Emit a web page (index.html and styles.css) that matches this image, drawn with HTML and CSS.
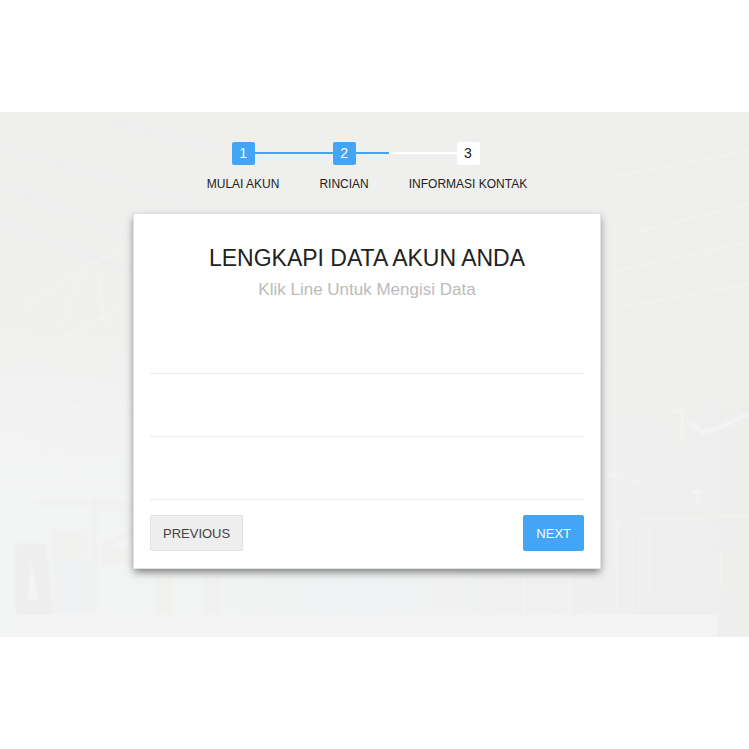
FILE: index.html
```html
<!DOCTYPE html>
<html lang="id">
<head>
    <meta charset="UTF-8">
    <meta name="viewport" content="width=device-width, initial-scale=1.0">
    <title>Lengkapi Data Akun</title>
    <link rel="stylesheet" href="styles.css">
</head>
<body>
    <main class="page">
        <svg class="backdrop" viewBox="0 0 749 525" preserveAspectRatio="none" aria-hidden="true">
            <defs>
                <linearGradient id="haze" x1="0" y1="0" x2="1" y2="0">
                    <stop offset="0" stop-color="#f3f4f4"/>
                    <stop offset="0.5" stop-color="#f1f2f3"/>
                    <stop offset="1" stop-color="#eeeeed"/>
                </linearGradient>
                <linearGradient id="fade" x1="0" y1="0" x2="0" y2="1">
                    <stop offset="0" stop-color="#efefed"/>
                    <stop offset="0.4" stop-color="#efefed" stop-opacity="0.8"/>
                    <stop offset="0.7" stop-color="#efefed" stop-opacity="0"/>
                </linearGradient>
                <filter id="soft" color-interpolation-filters="sRGB"><feGaussianBlur stdDeviation="1"/></filter>
            </defs>
            <rect width="749" height="525" fill="url(#haze)"/>
            <rect width="749" height="525" fill="url(#fade)"/>
            <g filter="url(#soft)" fill="none">
                <!-- roof beams -->
                <path stroke="#eeeeee" stroke-width="7" d="M0 35L190 90M0 72L140 130M0 110L134 160M110 10L230 40"/>
                <path stroke="#f2f2f0" stroke-width="2" d="M25 195L85 155L134 135M85 155L60 215M98 155L105 215M0 255L134 190M610 65L749 39M615 125L749 92M610 160L749 130M615 196L749 172M683 0V25M643 110V140M710 133V158"/>
                <path stroke="#f3f3f1" stroke-width="3" d="M0 345L134 327M0 372H134M0 300L134 290"/>
                <!-- lamps -->
                <path stroke="#f4f3f1" stroke-width="3" d="M673 299H687M682 301V328M607 363H620M630 370H639M692 380H702M698 382V394M652 392H661M76 336V362M70 336H81"/>
                <path stroke="#f3f3f3" stroke-width="5" d="M688 310L705 321L720 315L749 302"/>
                <!-- windows and doors -->
                <path stroke="#f2f1ef" stroke-width="3" d="M617 525V408L749 404M632 417V525M650 417V480M721 440V475"/>
                <path stroke="#f0f0ee" stroke-width="3" d="M95 382V503M35 391H134M100 396H134M102 435L134 418"/>
                <path fill="#eeeeee" d="M16 432H46L54 503H16Z"/>
                <path fill="#f3f4f5" d="M31 447L38 488H28Z"/>
                <path fill="#f1f1f0" d="M52 418H88V447H52ZM103 435H128V453H103ZM157 458H174V503H157ZM205 458H220V503H205Z"/>
                <path fill="#eff1f3" d="M54 448H93V503H54Z"/>
                <path stroke="#f4f4f4" stroke-width="2" d="M175 458V503M258 458V503M341 458V503M524 458V503M569 458V503"/>
            </g>
        </svg>

        <form class="wizard">
            <ol class="steps">
                <li class="step active">Mulai Akun</li>
                <li class="step active">Rincian</li>
                <li class="step">Informasi Kontak</li>
            </ol>

            <fieldset class="card">
                <h2 class="title">Lengkapi Data Akun Anda</h2>
                <h3 class="subtitle">Klik Line Untuk Mengisi Data</h3>
                <input class="field" type="text" name="field1" aria-label="Data 1">
                <input class="field" type="text" name="field2" aria-label="Data 2">
                <input class="field" type="text" name="field3" aria-label="Data 3">
                <div class="actions">
                    <button type="button" class="btn">Previous</button>
                    <button type="button" class="btn btn-primary">Next</button>
                </div>
            </fieldset>
        </form>

        <footer class="strip"></footer>
    </main>
</body>
</html>
```

FILE: styles.css
```css
* {
    box-sizing: border-box;
}
body {
    margin: 0;
    padding: 112px 0;
    background-color: #fff;
    font-family: "Liberation Sans", Arial, sans-serif;
    color: #222;
}
.page {
    position: relative;
    padding: 30px 32px 0 17px;
}
.backdrop {
    position: absolute;
    top: 0;
    left: 0;
    width: 100%;
    height: 100%;
}
.wizard {
    position: relative;
    width: 67%;
    max-width: 466px;
    margin: 0 auto;
}

/* progress steps */
.steps {
    display: flex;
    justify-content: center;
    list-style: none;
    counter-reset: step;
    margin: 0 0 23px;
    padding: 0;
}
.step {
    position: relative;
    padding: 0 20px;
    font-size: 12px;
    line-height: 14px;
    text-align: center;
    text-transform: uppercase;
    white-space: nowrap;
    counter-increment: step;
}
.step::before {
    content: counter(step);
    display: block;
    position: relative;
    z-index: 1;
    width: 23px;
    margin: 0 auto 12px;
    border-radius: 2px;
    background-color: #fff;
    font-size: 14px;
    line-height: 23px;
}
.step::after {
    content: "";
    position: absolute;
    top: 10px;
    left: 0;
    right: 0;
    height: 2px;
    background-color: #fff;
}
.step:first-child::after {
    left: 50%;
}
.step:last-child::after {
    right: 50%;
}
.step.active::before {
    background-color: #42a5f5;
    color: #fff;
}
.step.active::after {
    background-color: #42a5f5;
}

/* form card */
.card {
    margin: 0;
    padding: 30px 16px 17px;
    border: none;
    background-color: #fff;
    box-shadow: 0 0 0 1px #dfe3e3, 0 4px 8px rgba(0, 0, 0, 0.5);
    text-align: center;
}
.title {
    margin: 0;
    font-size: 23px;
    font-weight: normal;
    line-height: 28px;
    text-transform: uppercase;
}
.subtitle {
    margin: 8px 0 26px;
    color: #bbb;
    font-size: 17px;
    font-weight: normal;
    line-height: 20px;
}
.field {
    display: block;
    width: 100%;
    height: 48px;
    margin-bottom: 15px;
    padding: 12px 0;
    border: none;
    border-bottom: 1px solid #ebebeb;
    background: none;
    font: inherit;
    outline: none;
}
.field:focus {
    border-bottom-color: #42a5f5;
}
.actions {
    display: flex;
    justify-content: space-between;
}
.btn {
    height: 36px;
    padding: 0 12px;
    border: 1px solid #e2e2e2;
    border-radius: 2px;
    background-color: #eee;
    color: #444;
    font-family: inherit;
    font-size: 13px;
    text-transform: uppercase;
    cursor: pointer;
}
.btn-primary {
    border-color: #42a5f5;
    background-color: #42a5f5;
    color: #fff;
}

.strip {
    position: relative;
    height: 22px;
    margin-top: 47px;
    background-color: #f4f4f4;
}
```
